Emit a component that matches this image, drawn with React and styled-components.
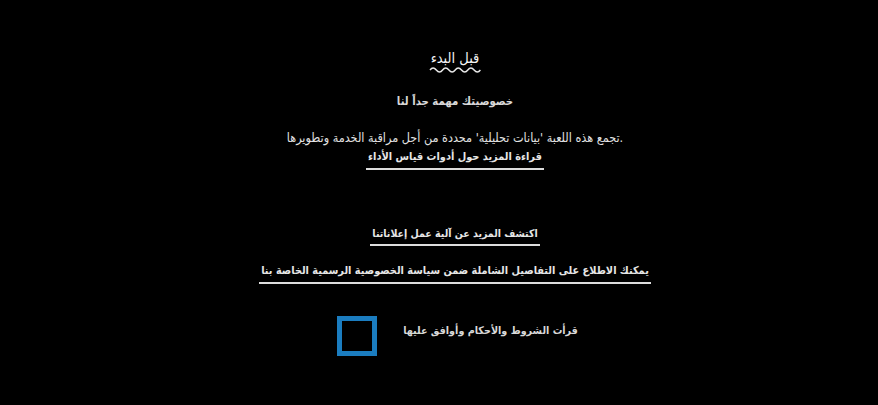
import React from "react";
import styled, { createGlobalStyle } from "styled-components";

const Global = createGlobalStyle`
  html, body { margin: 0; padding: 0; background: #000; }
  body { font-family: "DejaVu Sans Condensed", "DejaVu Sans", sans-serif; }
`;

const Screen = styled.div`
  width: 878px;
  height: 405px;
  background: #000;
  display: flex;
  flex-direction: column;
  align-items: center;
  box-sizing: border-box;
  padding: 48px 0 0 32px;
  direction: rtl;
`;

const Line = styled.div`
  text-align: center;
  white-space: nowrap;
  font-size: ${(p) => p.$size || 12}px;
  font-weight: ${(p) => (p.$bold ? 700 : 400)};
  color: ${(p) => p.$color || "#e0e0e0"};
  margin-top: ${(p) => p.$mt || 0}px;
  line-height: ${(p) => p.$lh || 20}px;
`;

const Underlined = styled.span`
  display: inline-block;
  border-bottom: 2px solid #dcdcdc;
  padding: 0 2px 2px;
  line-height: 18px;
`;

const Wave = styled.svg`
  display: block;
  margin-top: -3px;
`;

const CheckRow = styled.div`
  display: flex;
  flex-direction: row-reverse;
  align-items: center;
  gap: 26px;
  margin-top: 32px;
  margin-left: 5px;
  direction: ltr;
`;

const Box = styled.div`
  width: 40px;
  height: 40px;
  box-sizing: border-box;
  border: 5px solid #1b7dc0;
`;

const Label = styled(Line)`
  direction: rtl;
  margin-top: -10px;
`;

export default function App() {
  return (
    <>
      <Global />
      <Screen>
        <Line $size={14.5} $color="#f4f4f4" $lh={20}>
          قبل البدء
        </Line>
        <Wave width="52" height="8" viewBox="0 0 52 8">
          <path
            d="M1 5 Q4 1 7.3 5 T13.6 5 T19.9 5 T26.2 5 T32.5 5 T38.8 5 T45.1 5 T51.4 5"
            fill="none"
            stroke="#e8e8e8"
            strokeWidth="1.4"
          />
        </Wave>
        <Line $bold $size={11.3} $mt={19} $color="#d8d8d8">
          خصوصيتك مهمة جداً لنا
        </Line>
        <Line $size={12.5} $mt={16} $color="#e2e2e2">
          .تجمع هذه اللعبة 'بيانات تحليلية' محددة من أجل مراقبة الخدمة وتطويرها
        </Line>
        <Line $bold $size={10.9} $mt={-1} $color="#e6e6e6">
          <Underlined>قراءة المزيد حول أدوات قياس الأداء</Underlined>
        </Line>
        <Line $bold $size={10.5} $mt={53} $color="#e6e6e6">
          <Underlined>اكتشف المزيد عن آلية عمل إعلاناتنا</Underlined>
        </Line>
        <Line $bold $size={10.85} $mt={15} $color="#e6e6e6">
          <Underlined>
            يمكنك الاطلاع على التفاصيل الشاملة ضمن سياسة الخصوصية الرسمية الخاصة بنا
          </Underlined>
        </Line>
        <CheckRow>
          <Label $bold $size={10.7} $color="#d8d8d8">
            قرأت الشروط والأحكام وأوافق عليها
          </Label>
          <Box />
        </CheckRow>
      </Screen>
    </>
  );
}
